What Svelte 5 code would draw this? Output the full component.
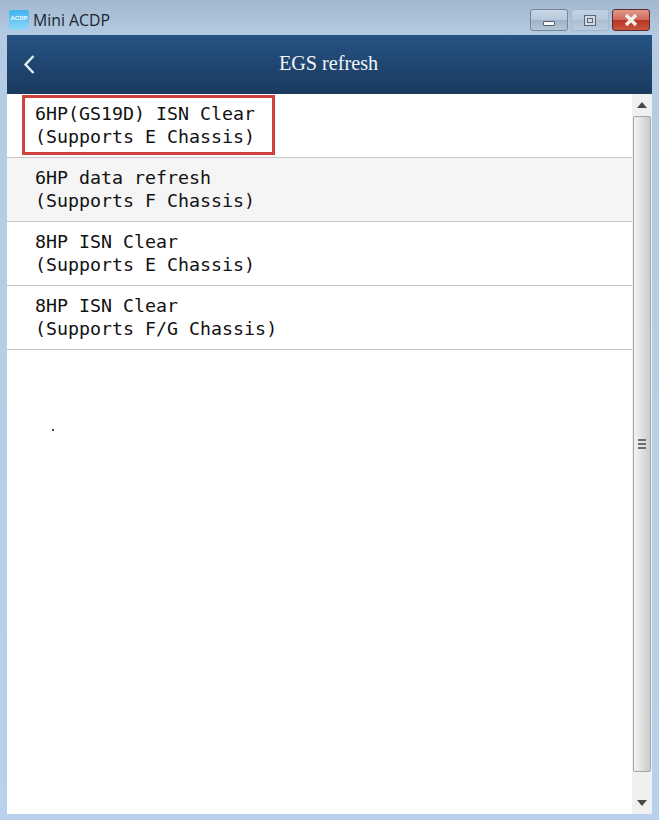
<script>
  const rows = [
    ["6HP(GS19D) ISN Clear", "(Supports E Chassis)"],
    ["6HP data refresh", "(Supports F Chassis)"],
    ["8HP ISN Clear", "(Supports E Chassis)"],
    ["8HP ISN Clear", "(Supports F/G Chassis)"],
  ];
</script>

<div class="window">
  <div class="titlebar">
    <div class="app-title">
      <div class="app-icon"><b>ACDP</b></div>
      <span>Mini ACDP</span>
    </div>
    <div class="controls">
      <div class="ctl">
        <span class="min-glyph"></span>
      </div>
      <div class="ctl ctl-max">
        <span class="max-glyph"></span>
      </div>
      <div class="ctl ctl-close">
        <svg width="16" height="14" viewBox="0 0 16 14">
          <path d="M3 2 L13 12 M13 2 L3 12" stroke="#f6ece8" stroke-width="3.4" />
        </svg>
      </div>
    </div>
  </div>

  <div class="client">
    <header class="nav">
      <svg class="back" width="14" height="20" viewBox="0 0 14 20">
        <path d="M11.5 2 L3.5 10.5 L11.5 19" fill="none" stroke="#e6edf3" stroke-width="2.4" />
      </svg>
      <h1>EGS refresh</h1>
    </header>

    <div class="body">
      <ul class="list">
        {#each rows as row, i}
          <li class:alt={i === 1}>
            <span>{row[0]}</span>
            <span>{row[1]}</span>
          </li>
        {/each}
        <div class="highlight"></div>
        <div class="speck"></div>
      </ul>

      <div class="scrollbar">
        <div class="arrow">
          <svg width="10" height="6" viewBox="0 0 10 6"><path d="M5 0 L10 6 L0 6 Z" fill="#4a4a4a" /></svg>
        </div>
        <div class="thumb">
          <div class="grip"><i></i><i></i><i></i></div>
        </div>
        <div class="arrow arrow-down">
          <svg width="10" height="6" viewBox="0 0 10 6"><path d="M0 0 L10 0 L5 6 Z" fill="#4a4a4a" /></svg>
        </div>
      </div>
    </div>
  </div>
</div>

<style>
  :global(body) {
    margin: 0;
  }
  .window {
    width: 659px;
    height: 820px;
    box-sizing: border-box;
    padding: 0 7px 6px 7px;
    display: flex;
    flex-direction: column;
    background: linear-gradient(180deg, #a3b8cd 0, #b4cbe3 35px, #b9d1ec 100%);
  }
  .titlebar {
    height: 35px;
    flex: none;
    display: flex;
    justify-content: space-between;
    align-items: flex-start;
  }
  .app-title {
    display: flex;
    align-items: center;
    gap: 4px;
    margin-top: 10px;
    font: 15.8px/20px "Open Sans", sans-serif;
    color: #1a2430;
  }
  .app-icon {
    width: 20px;
    height: 20px;
    margin-left: 2px;
    border-radius: 3px;
    overflow: hidden;
    display: flex;
    justify-content: center;
    background: linear-gradient(180deg, #3fb4ee 0, #8fd8f6 100%);
  }
  .app-icon b {
    font: 700 6px/16px "Liberation Sans", sans-serif;
    color: #f2fbff;
  }
  .controls {
    display: flex;
    gap: 3px;
    margin-top: 9px;
    margin-right: 2px;
  }
  .ctl {
    width: 38px;
    height: 22px;
    box-sizing: border-box;
    border: 1px solid #72859a;
    border-radius: 3px;
    display: flex;
    align-items: center;
    justify-content: center;
    background: linear-gradient(180deg, #c9d7e5 0, #b9c9da 48%, #a0b3c7 52%, #b4c5d6 100%);
  }
  .ctl-max {
    border-color: #a3b6ca;
    background: linear-gradient(180deg, #c3d3e4 0, #b8c9db 48%, #aabdd1 52%, #bccde0 100%);
  }
  .ctl-close {
    border-color: #5c2a30;
    background: linear-gradient(180deg, #e0998c 0, #cf6a59 48%, #b93424 52%, #c9583f 100%);
  }
  .min-glyph {
    width: 12px;
    height: 5px;
    margin-top: 7px;
    box-sizing: border-box;
    background: #f4f6f8;
    border: 1px solid #54606e;
    border-radius: 1px;
  }
  .max-glyph {
    width: 12px;
    height: 11px;
    box-sizing: border-box;
    background: #d3dae3;
    border: 1px solid #5b6775;
    position: relative;
  }
  .max-glyph::after {
    content: "";
    position: absolute;
    left: 2px;
    top: 2px;
    width: 6px;
    height: 5px;
    border: 1px solid #5b6775;
    box-sizing: border-box;
  }
  .client {
    flex: 1;
    display: flex;
    flex-direction: column;
    min-height: 0;
    background: #fff;
  }
  .nav {
    height: 59px;
    flex: none;
    display: flex;
    align-items: center;
    justify-content: center;
    position: relative;
    background: linear-gradient(180deg, #265483 0, #1f4670 50%, #1a3a5e 100%);
  }
  .back {
    position: absolute;
    left: 15px;
    top: 19px;
  }
  .nav h1 {
    margin: 0 2px 0 0;
    font: 400 20.2px/24px "Liberation Serif", serif;
    color: #f1f4f7;
    transform: translateY(-2px);
  }
  .body {
    flex: 1;
    display: flex;
    min-height: 0;
  }
  .list {
    flex: 1;
    margin: 0;
    padding: 0;
    list-style: none;
    position: relative;
  }
  .list li {
    height: 61px;
    border-bottom: 1px solid #c6c6c6;
    padding: 0 0 2px 28px;
    display: flex;
    flex-direction: column;
    justify-content: center;
    font: 18.3px/23px "DejaVu Sans Mono", monospace;
    color: #111;
    white-space: pre;
  }
  .list li.alt {
    background: #f5f5f5;
  }
  .highlight {
    position: absolute;
    left: 15px;
    top: 1px;
    width: 253px;
    height: 60px;
    box-sizing: border-box;
    border: 3px solid #d0403f;
  }
  .speck {
    position: absolute;
    left: 45px;
    top: 335px;
    width: 2px;
    height: 2px;
    background: #444;
  }
  .scrollbar {
    width: 20px;
    flex: none;
    display: flex;
    flex-direction: column;
    background: #f0f0f0;
  }
  .arrow {
    height: 22px;
    flex: none;
    display: flex;
    align-items: center;
    justify-content: center;
  }
  .arrow-down {
    height: 42px;
    align-items: flex-end;
    padding-bottom: 8px;
    box-sizing: border-box;
  }
  .thumb {
    flex: 1;
    margin: 0 1px;
    box-sizing: border-box;
    border: 1px solid #a6a6a6;
    border-radius: 2px;
    display: flex;
    align-items: center;
    justify-content: center;
    background: linear-gradient(90deg, #f2f2f2 0, #e0e0e0 50%, #cccccc 100%);
  }
  .grip {
    display: flex;
    flex-direction: column;
    gap: 2px;
    width: 8px;
    margin-right: 1px;
  }
  .grip i {
    display: block;
    height: 2px;
    background: #6e6e6e;
  }
</style>
